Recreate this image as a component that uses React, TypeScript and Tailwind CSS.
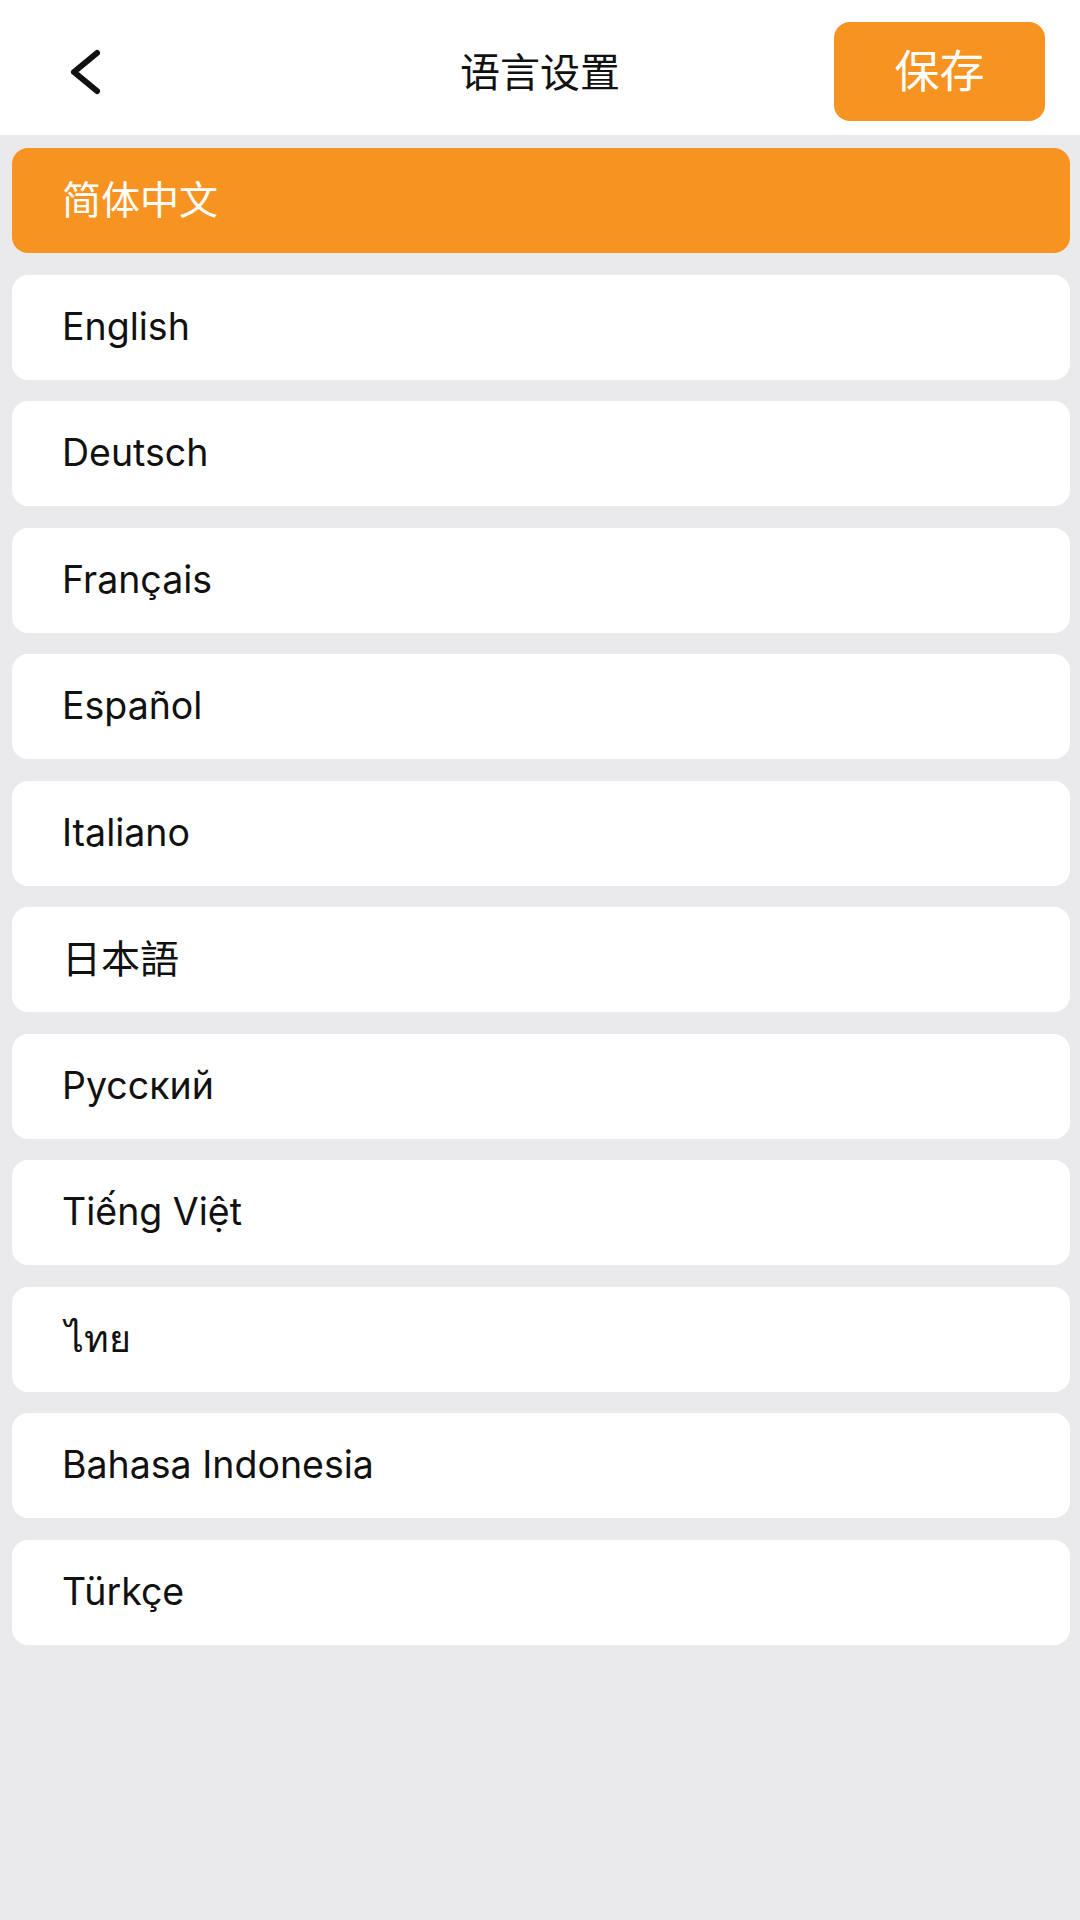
import React, { useState } from 'react';

const languages = [
  { label: '简体中文', cjk: true },
  { label: 'English' },
  { label: 'Deutsch' },
  { label: 'Français' },
  { label: 'Español' },
  { label: 'Italiano' },
  { label: '日本語', cjk: true },
  { label: 'Русский' },
  { label: 'Tiếng Việt' },
  { label: 'ไทย', thai: true },
  { label: 'Bahasa Indonesia' },
  { label: 'Türkçe' },
];

const font = { fontFamily: 'Inter, "Noto Sans", "Noto Sans CJK SC", sans-serif' };

export default function App() {
  const [selected, setSelected] = useState(0);

  return (
    <div className="min-h-[1920px] w-[1080px] bg-[#eaeaec]" style={font}>
      {/* Header */}
      <div className="relative flex h-[135px] items-center justify-center bg-white">
        <button className="absolute left-[64px] top-[47px] flex h-[50px] w-[40px] items-center justify-center">
          <svg width="36" height="46" viewBox="0 0 36 46" fill="none">
            <path
              d="M31 4 L8 23 L31 42"
              stroke="#111"
              strokeWidth="6"
              strokeLinecap="round"
              strokeLinejoin="round"
            />
          </svg>
        </button>
        <h1 className="mt-[10px] text-[40px] font-normal text-[#111]">语言设置</h1>
        <button className="absolute right-[35px] top-[22px] flex h-[99px] w-[211px] items-center justify-center rounded-[16px] bg-[#f79421] text-[45px] text-white">
          保存
        </button>
      </div>

      {/* Language list */}
      <div className="flex flex-col gap-[21.5px] pl-[12px] pr-[10px] pt-[13px]">
        {languages.map((lang, i) => (
          <div
            key={lang.label}
            onClick={() => setSelected(i)}
            className={
              i === selected
                ? 'flex h-[105px] items-center rounded-[16px] bg-[#f79421] pl-[50px] text-white'
                : 'flex h-[105px] items-center rounded-[16px] bg-white pl-[50px] text-[#111]'
            }
          >
            <span
              className={
                lang.cjk ? 'text-[39px]' : lang.thai ? 'ml-[3px] text-[37.5px]' : 'text-[37.5px]'
              }
            >
              {lang.label}
            </span>
          </div>
        ))}
      </div>
    </div>
  );
}
